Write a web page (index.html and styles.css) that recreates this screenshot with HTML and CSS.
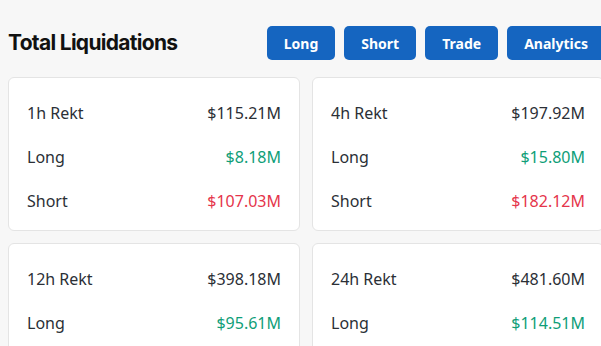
FILE: index.html
```html
<!DOCTYPE html>
<html lang="en">
<head>
    <meta charset="UTF-8">
    <meta name="viewport" content="width=device-width, initial-scale=1.0">
    <title>Total Liquidations</title>
    <link rel="stylesheet" href="styles.css">
</head>
<body>
    <div class="page">
        <div class="header">
            <h1>Total Liquidations</h1>
            <div class="tabs">
                <button class="btn">Long</button>
                <button class="btn">Short</button>
                <button class="btn">Trade</button>
                <button class="btn">Analytics</button>
            </div>
        </div>

        <div class="grid">
            <div class="card">
                <div class="row"><span>1h Rekt</span><span>$115.21M</span></div>
                <div class="row"><span>Long</span><span class="up">$8.18M</span></div>
                <div class="row"><span>Short</span><span class="down">$107.03M</span></div>
            </div>
            <div class="card">
                <div class="row"><span>4h Rekt</span><span>$197.92M</span></div>
                <div class="row"><span>Long</span><span class="up">$15.80M</span></div>
                <div class="row"><span>Short</span><span class="down">$182.12M</span></div>
            </div>
            <div class="card">
                <div class="row"><span>12h Rekt</span><span>$398.18M</span></div>
                <div class="row"><span>Long</span><span class="up">$95.61M</span></div>
            </div>
            <div class="card">
                <div class="row"><span>24h Rekt</span><span>$481.60M</span></div>
                <div class="row"><span>Long</span><span class="up">$114.51M</span></div>
            </div>
        </div>
    </div>
</body>
</html>
```

FILE: styles.css
```css
html { overflow: hidden; }
body { margin: 0; background: #f7f7f7; font-family: "Noto Sans", Arial, sans-serif; color: #2b2f36; }
.page { width: 597px; padding: 26px 0 0 8px; }
.header { display: flex; justify-content: space-between; align-items: center; margin-bottom: 17px; }
h1 { margin: 0 0 2px; font-family: Inter, Arial, sans-serif; font-size: 21px; font-weight: 700; letter-spacing: -0.7px; color: #111; }
.tabs { display: flex; gap: 9px; }
.btn { height: 34px; padding: 0 17px; border: none; border-radius: 5px; background: #1565c0; color: #fff; font-family: "Noto Sans", Arial, sans-serif; font-size: 14px; font-weight: 700; cursor: pointer; }
.grid { display: grid; grid-template-columns: 292px 292px; gap: 12px; }
.card { background: #fff; border: 1px solid #e4e4e4; border-radius: 6px; padding: 13px 18px 7px; }
.row { display: flex; justify-content: space-between; align-items: center; height: 44px; font-size: 16px; }
.up { color: #0f9e78; }
.down { color: #e5354b; }
```
